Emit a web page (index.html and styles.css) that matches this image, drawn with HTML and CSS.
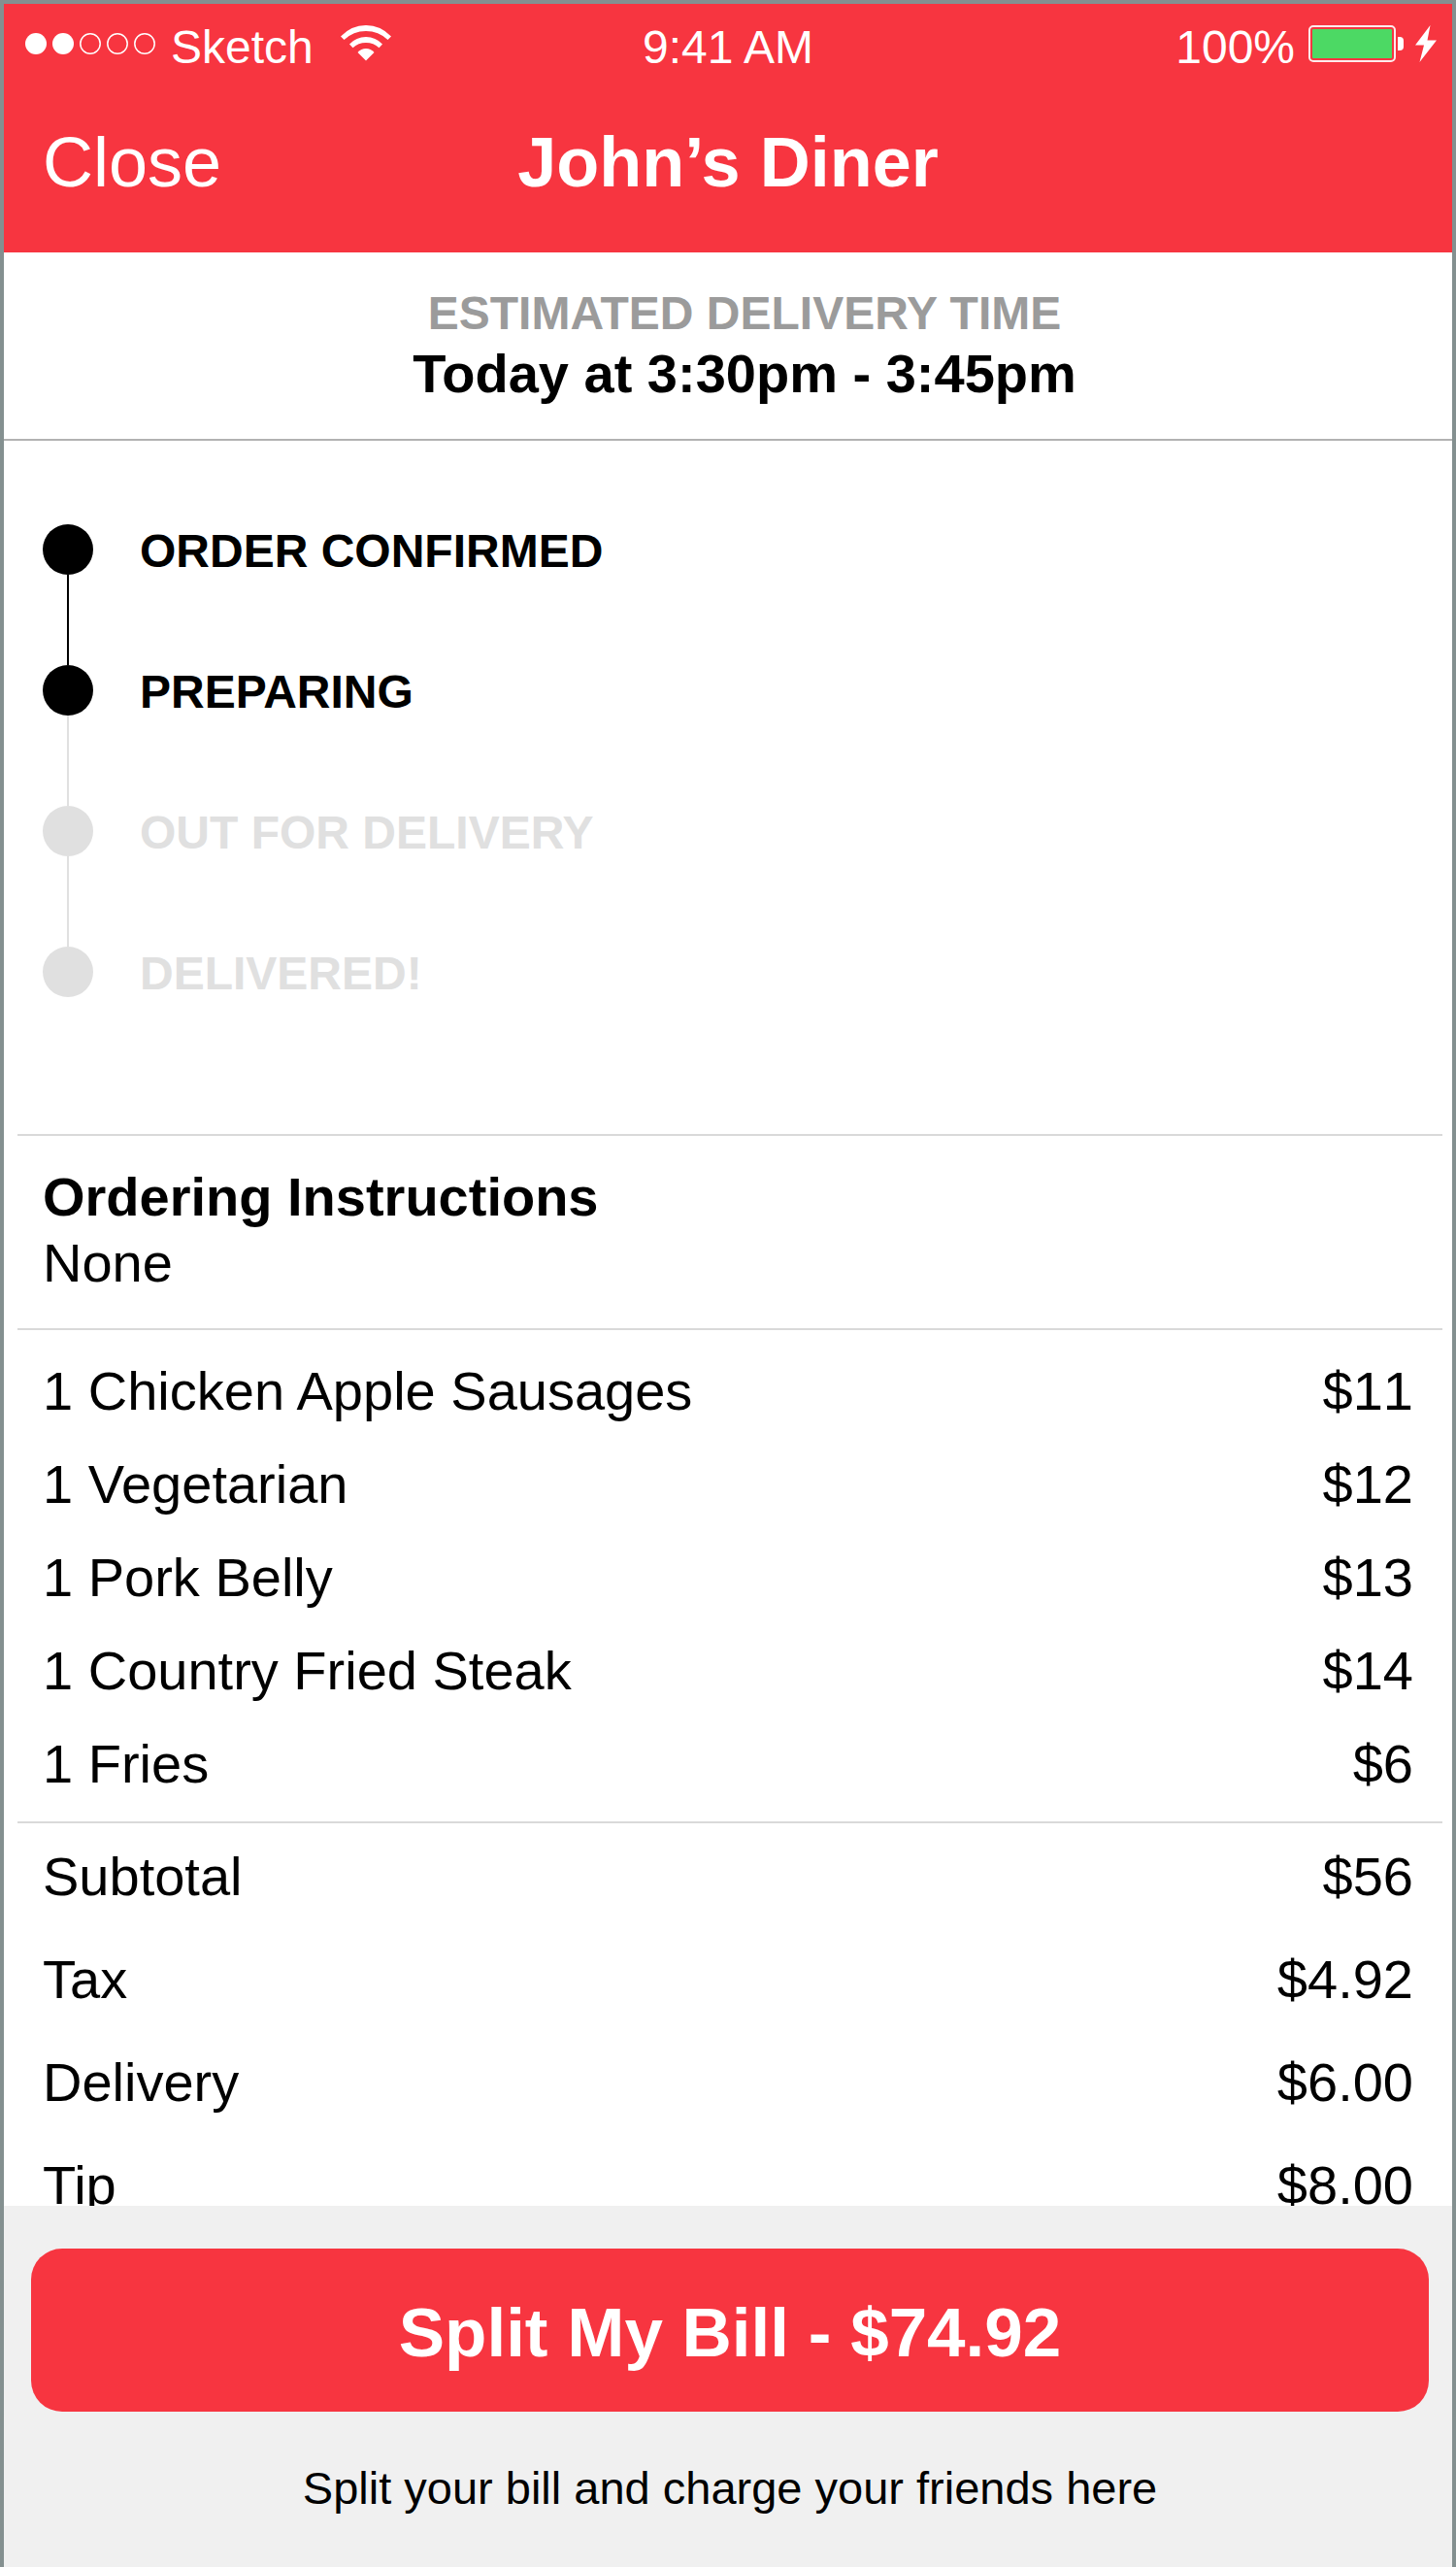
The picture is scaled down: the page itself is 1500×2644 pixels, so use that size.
FILE: index.html
```html
<!DOCTYPE html>
<html lang="en">
<head>
    <meta charset="UTF-8">
    <meta name="viewport" content="width=device-width, initial-scale=1.0">
    <title>John’s Diner - Order Status</title>
    <link rel="stylesheet" href="styles.css">
</head>
<body>
    <header class="header">
        <div class="status-bar">
            <div class="status-left">
                <svg class="signal" width="134" height="22" viewBox="0 0 134 22" aria-hidden="true">
                    <g fill="#fff">
                        <circle cx="11" cy="11" r="11"/>
                        <circle cx="39" cy="11" r="11"/>
                    </g>
                    <g fill="none" stroke="#fff" stroke-width="1.500">
                        <circle cx="67" cy="11" r="10.200"/>
                        <circle cx="95" cy="11" r="10.200"/>
                        <circle cx="123" cy="11" r="10.200"/>
                    </g>
                </svg>
                <span class="status-text">Sketch</span>
                <svg class="wifi" width="52" height="38" viewBox="0 0 52 38" aria-hidden="true">
                    <path d="M0 11.500Q11 0 26 0T52 11.500L48.500 15Q39 6 26 6T3.500 15Z" fill="#fff"/>
                    <path d="M9 19.500Q16 12 26 12T43 19.500L39.500 23.200Q34 18 26 18T12.500 23.200Z" fill="#fff"/>
                    <path d="M17.500 28Q21 24 26 24T34.500 28L26 36.500Z" fill="#fff"/>
                </svg>
            </div>
            <span class="status-text">9:41 AM</span>
            <div class="status-right">
                <span class="status-text">100%</span>
                <svg class="battery" width="98" height="38" viewBox="0 0 98 38" aria-hidden="true">
                    <rect x="1" y="1" width="88" height="36" rx="4" fill="none" stroke="#fff" stroke-opacity="0.9" stroke-width="2"/>
                    <rect x="4" y="4" width="82" height="30" rx="1" fill="#4cd964"/>
                    <path d="M92 12h2q4 0 4 4v6q0 4-4 4h-2z" fill="#fff"/>
                </svg>
                <svg class="bolt" width="22" height="38" viewBox="0 0 22 38" aria-hidden="true">
                    <path d="M15.500 0L0 20.500H9L4.500 38L22 15.500H12.500Z" fill="#fff"/>
                </svg>
            </div>
        </div>
        <nav class="nav-bar">
            <a href="#" class="close-link">Close</a>
            <h1>John’s Diner</h1>
        </nav>
    </header>

    <main class="content">
        <section class="delivery">
            <h2>ESTIMATED DELIVERY TIME</h2>
            <p>Today at 3:30pm - 3:45pm</p>
        </section>

        <ol class="progress">
            <li class="step done linked"><span class="step-marker"></span>ORDER CONFIRMED</li>
            <li class="step done"><span class="step-marker"></span>PREPARING</li>
            <li class="step"><span class="step-marker"></span>OUT FOR DELIVERY</li>
            <li class="step"><span class="step-marker"></span>DELIVERED!</li>
        </ol>

        <section class="panel instructions">
            <h3>Ordering Instructions</h3>
            <p>None</p>
        </section>

        <section class="panel items">
            <table>
                <tr><th scope="row">1 Chicken Apple Sausages</th><td>$11</td></tr>
                <tr><th scope="row">1 Vegetarian</th><td>$12</td></tr>
                <tr><th scope="row">1 Pork Belly</th><td>$13</td></tr>
                <tr><th scope="row">1 Country Fried Steak</th><td>$14</td></tr>
                <tr><th scope="row">1 Fries</th><td>$6</td></tr>
            </table>
        </section>

        <section class="panel totals">
            <table>
                <tr><th scope="row">Subtotal</th><td>$56</td></tr>
                <tr><th scope="row">Tax</th><td>$4.92</td></tr>
                <tr><th scope="row">Delivery</th><td>$6.00</td></tr>
                <tr><th scope="row">Tip</th><td>$8.00</td></tr>
            </table>
        </section>
    </main>

    <footer class="footer">
        <button type="button" class="btn-primary">Split My Bill - $74.92</button>
        <p>Split your bill and charge your friends here</p>
    </footer>
</body>
</html>
```

FILE: styles.css
```css
* {
    box-sizing: border-box;
}
body {
    display: flex;
    flex-direction: column;
    height: 100vh;
    margin: 0;
    border: 4px solid #849090;
    border-bottom: none;
    background-color: #fff;
    color: #000;
    font-family: "Liberation Sans", Arial, sans-serif;
    font-size: 56px;
}
h1, h2, h3, p {
    margin: 0;
}

/* Header */
.header {
    flex: none;
    background-color: #f73540;
    color: #fff;
}
.status-bar {
    display: grid;
    grid-template-columns: 1fr auto 1fr;
    align-items: center;
    padding-top: 9px;
    font-size: 48px;
    line-height: 56px;
}
.status-text {
    padding-top: 8px;
}
.status-left, .status-right {
    display: flex;
    align-items: center;
}
.status-left {
    padding-left: 22px;
}
.status-left .status-text {
    margin: 0 28px 0 16px;
}
.status-right {
    justify-content: flex-end;
    padding-right: 16px;
}
.battery {
    margin: 0 12px 0 14px;
}
.nav-bar {
    display: grid;
    grid-template-columns: 1fr auto 1fr;
    padding: 48px 0 51px;
    font-size: 72px;
    line-height: 84px;
}
.nav-bar h1 {
    font-size: 72px;
}
.close-link {
    padding-left: 40px;
    color: #fff;
    text-decoration: none;
}

/* Order details */
.content {
    flex: 1;
    min-height: 0;
    overflow-y: auto;
    scrollbar-width: none;
}
.delivery {
    padding: 33px 0 35px 34px;
    border-bottom: 2px solid #b2b2b2;
    text-align: center;
}
.delivery h2 {
    color: #9b9b9b;
    font-size: 48px;
    line-height: 60px;
}
.delivery p {
    font-weight: bold;
    line-height: 64px;
}
.progress {
    margin: 0;
    padding: 86px 40px 141px;
    list-style: none;
}
.step {
    display: flex;
    gap: 48px;
    height: 145px;
    color: #e0e0e0;
    font-size: 48px;
    font-weight: bold;
    line-height: 56px;
}
.step:last-child {
    height: 52px;
}
.step-marker {
    display: flex;
    flex-direction: column;
    align-items: center;
    width: 52px;
}
.step-marker::before {
    content: "";
    flex: none;
    width: 52px;
    height: 52px;
    border-radius: 50%;
    background-color: #e0e0e0;
}
.step-marker::after {
    content: "";
    flex: 1;
    width: 2px;
    background-color: #e0e0e0;
}
.done {
    color: #000;
}
.done .step-marker::before,
.linked .step-marker::after {
    background-color: #000;
}
.panel {
    margin: 0 10px 0 14px;
    padding: 0 30px 0 26px;
    border-top: 2px solid #d9d9d9;
}
.instructions {
    padding-top: 29px;
    padding-bottom: 33px;
    line-height: 68px;
}
.instructions h3 {
    font-size: 56px;
}
table {
    width: 100%;
    border-collapse: collapse;
}
th, td {
    padding: 0;
    font-weight: normal;
    text-align: left;
}
td {
    text-align: right;
    font-kerning: none;
}
.items {
    padding-top: 15px;
    padding-bottom: 11px;
    line-height: 96px;
}
.totals {
    padding-top: 2px;
    line-height: 106px;
}

/* Footer */
.footer {
    flex: none;
    padding: 44px 24px 51px 28px;
    background-color: #f0f0f0;
    text-align: center;
}
.footer p {
    margin-top: 49px;
    font-size: 47px;
    line-height: 60px;
}
.btn-primary {
    display: block;
    width: 100%;
    padding: 45px 24px 39px;
    border: none;
    border-radius: 32px;
    background-color: #f73540;
    color: #fff;
    font-family: inherit;
    font-size: 71px;
    font-weight: bold;
    line-height: 84px;
    cursor: pointer;
}
```
